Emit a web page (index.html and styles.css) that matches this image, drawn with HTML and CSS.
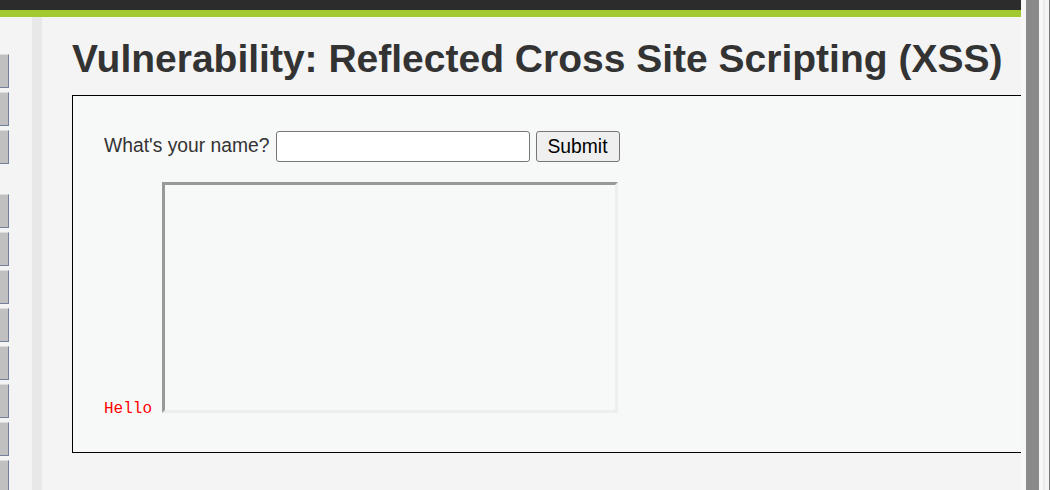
FILE: index.html
```html
<!DOCTYPE html>
<html>
<head>
<meta charset="utf-8">
<link rel="stylesheet" href="styles.css">
<title>DVWA XSS</title>
</head>
<body>
<div class="screen">
  <div class="page">
    <div class="topbar"></div>
    <div class="greenbar"></div>
    <div class="main">
      <div class="sidebar">
        <div class="group">
          <div class="navbtn"></div>
          <div class="navbtn"></div>
          <div class="navbtn"></div>
        </div>
        <div class="group">
          <div class="navbtn"></div>
          <div class="navbtn"></div>
          <div class="navbtn"></div>
          <div class="navbtn"></div>
          <div class="navbtn"></div>
          <div class="navbtn"></div>
          <div class="navbtn"></div>
          <div class="navbtn"></div>
        </div>
      </div>
      <div class="stripe"></div>
      <div class="content">
        <h1 class="title">Vulnerability: Reflected Cross Site Scripting (XSS)</h1>
        <div class="vulnbox">
          <form class="nameform">
            <span class="label">What's your name?</span>
            <input class="nameinput" type="text">
            <button class="submitbtn" type="button">Submit</button>
          </form>
          <div class="output"><span class="hello">Hello </span><span class="frame"></span></div>
        </div>
      </div>
    </div>
  </div>
  <div class="edge">
    <div class="edge-a"></div>
    <div class="edge-b"></div>
    <div class="edge-c"></div>
    <div class="edge-d"></div>
    <div class="edge-e"></div>
    <div class="edge-f"></div>
  </div>
</div>
</body>
</html>
```

FILE: styles.css
```css
html, body {
  margin: 0;
  padding: 0;
  height: 100%;
  overflow: hidden;
  background: #f4f4f4;
}

.screen {
  display: flex;
  height: 490px;
  width: 1050px;
}

.page {
  width: 1021px;
  flex: 0 0 1021px;
  overflow: hidden;
  display: flex;
  flex-direction: column;
  background: #f4f4f4;
  font-family: "Liberation Sans", Arial, sans-serif;
  color: #333333;
}

.topbar {
  flex: 0 0 10px;
  height: 10px;
  background: #2c2c2c;
}

.greenbar {
  flex: 0 0 7px;
  height: 7px;
  background: #a3c930;
}

.main {
  flex: 1 1 auto;
  min-height: 0;
  overflow: hidden;
  display: flex;
}

.sidebar {
  width: 32px;
  flex: 0 0 32px;
  display: flex;
  flex-direction: column;
  gap: 30px;
  padding-top: 37px;
}

.group {
  flex: 0 0 auto;
  display: flex;
  flex-direction: column;
  gap: 4px;
}

.navbtn {
  flex: 0 0 auto;
  width: 8px;
  height: 32px;
  background: #c0c0c0;
  border-top: 1px solid #dcdcdc;
  border-right: 1px solid #72809a;
  border-bottom: 1px solid #72809a;
}

.stripe {
  width: 10px;
  flex: 0 0 10px;
  background: #e8e8e8;
}

.content {
  flex: 1;
  padding-left: 30px;
  padding-top: 19px;
  min-width: 0;
}

.title {
  margin: 0;
  font-size: 39px;
  font-weight: bold;
  line-height: 45px;
  color: #333333;
  white-space: nowrap;
}

.vulnbox {
  margin-top: 14px;
  margin-right: -40px;
  border: 1px solid #000000;
  background: #f7f8f8;
  padding: 35px 0 34px 31px;
}

.nameform {
  margin: 0;
  display: flex;
  align-items: center;
  font-size: 19.3px;
}

.label {
  color: #333333;
  margin-right: 6px;
  position: relative;
  top: -1px;
}

.nameinput {
  box-sizing: border-box;
  width: 254px;
  height: 31px;
  border: 1px solid #767676;
  border-radius: 3px;
  background: #ffffff;
  margin: 0 6px 0 0;
  padding: 0;
}

.submitbtn {
  box-sizing: border-box;
  width: 84px;
  height: 31px;
  border: 1px solid #767676;
  border-radius: 3px;
  background: #efefef;
  font-family: "Liberation Sans", Arial, sans-serif;
  font-size: 19.3px;
  color: #000000;
  padding: 0;
  margin: 0;
}

.output {
  margin-top: 20px;
  font-family: "Liberation Mono", "Courier New", monospace;
  font-size: 16px;
  line-height: 18px;
  white-space: pre;
}

.hello {
  color: #ff0000;
}

.frame {
  display: inline-block;
  width: 450px;
  height: 225px;
  border-style: solid;
  border-width: 3px;
  border-color: #999999 #eeeeee #eeeeee #999999;
  background: #f7f8f8;
}

.edge {
  flex: 1;
  display: flex;
}

.edge-a {
  width: 5px;
  background: #f7f7f7;
}

.edge-b {
  width: 13px;
  background: #8a8a8a;
}

.edge-c {
  width: 4px;
  background: #f7f7f7;
}

.edge-d {
  width: 2px;
  background: #ebebeb;
}

.edge-e {
  width: 4px;
  background: #f4f4f4;
}

.edge-f {
  flex: 1;
  background: #7a7a7a;
}
```
